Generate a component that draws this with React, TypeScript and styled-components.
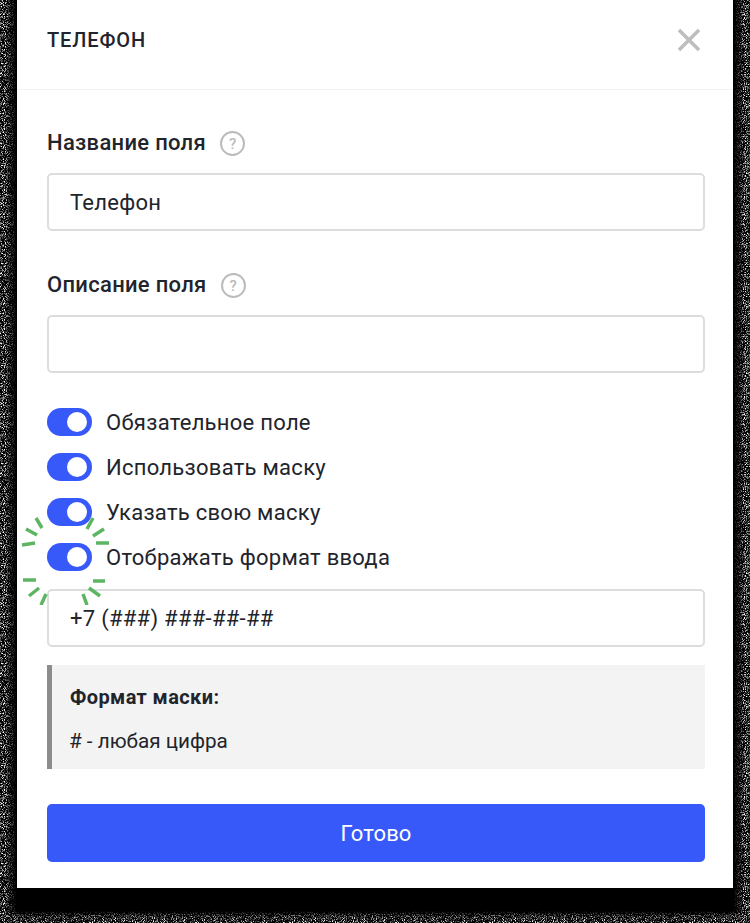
import React from "react"
import styled, { createGlobalStyle } from "styled-components"

const GlobalStyle = createGlobalStyle`
  html, body {
    margin: 0;
    padding: 0;
    background: #000000;
  }
  * {
    box-sizing: border-box;
  }
`;

const noise = encodeURIComponent(
  `<svg xmlns="http://www.w3.org/2000/svg" width="200" height="200"><filter id="n"><feTurbulence type="fractalNoise" baseFrequency="1.1" numOctaves="1" seed="4"/><feColorMatrix values="0 0 0 0 1 0 0 0 0 1 0 0 0 0 1 4 0 0 0 -1.9"/></filter><rect width="200" height="200" filter="url(#n)"/></svg>`
);

const toggles = ["Обязательное поле", "Использовать маску", "Указать свою маску", "Отображать формат ввода"];

const sparks = [
  [36, 518, 42, 528], [26, 529, 37, 535], [22, 545, 35, 543],
  [93, 518, 87, 529], [104, 529, 93, 536], [96, 543, 109, 543],
  [23, 580, 36, 580], [29, 596, 39, 588], [41, 605, 46, 594],
  [93, 581, 105, 581], [89, 588, 100, 596], [83, 594, 87, 605],
];

const App = () => {
  return (
    <>
      <GlobalStyle />
      <Page>
        <Card>
          <Header>
            <Title>ТЕЛЕФОН</Title>
            <CloseIcon viewBox="0 0 24 24">
              <path d="M2 2 L22 22 M22 2 L2 22" />
            </CloseIcon>
          </Header>
          <Body>
            <Field>
              <LabelRow>
                <Label>Название поля</Label>
                <Hint>?</Hint>
              </LabelRow>
              <Input defaultValue="Телефон" />
            </Field>
            <Field>
              <LabelRow>
                <Label>Описание поля</Label>
                <Hint>?</Hint>
              </LabelRow>
              <Input />
            </Field>
            <ToggleList>
              {toggles.map((t) => (
                <ToggleRow key={t}>
                  <Toggle />
                  <ToggleText>{t}</ToggleText>
                </ToggleRow>
              ))}
            </ToggleList>
            <Input defaultValue="+7 (###) ###-##-##" />
            <MaskNote>
              <MaskTitle>Формат маски:</MaskTitle>
              <MaskText># - любая цифра</MaskText>
            </MaskNote>
            <DoneButton>Готово</DoneButton>
          </Body>
          <Sparks viewBox="20 515 90 90">
            {sparks.map(([x1, y1, x2, y2]) => (
              <line key={`${x1}-${y1}`} x1={x1} y1={y1} x2={x2} y2={y2} />
            ))}
          </Sparks>
        </Card>
      </Page>
    </>
  )
}

const Page = styled.div`
  position: relative;
  width: 750px;
  height: 923px;
  overflow: hidden;
  background: #000000;
  padding: 0 17px;

  &::before {
    content: "";
    position: absolute;
    inset: 0;
    background-image: url("data:image/svg+xml,${noise}");
    mask-image: linear-gradient(to right, #000 5px, transparent 16px),
      linear-gradient(to left, #000 5px, transparent 16px),
      linear-gradient(to top, #000 4px, transparent 12px);
  }
`;

const Card = styled.div`
  position: relative;
  width: 716px;
  height: 888px;
  background: #FFFFFF;
`;

const Header = styled.div`
  height: 90px;
  padding: 0 32px 10px 30px;
  display: flex;
  align-items: center;
  justify-content: space-between;
  border-bottom: 1px solid #F3F3F3;
`;

const Title = styled.div`
  font-family: Roboto, sans-serif;
  font-size: 20px;
  font-weight: 500;
  letter-spacing: 0.9px;
  color: #22242C;
`;

const CloseIcon = styled.svg`
  width: 24px;
  height: 24px;
  fill: none;
  stroke: #BDBDBD;
  stroke-width: 3.5;
`;

const Body = styled.div`
  padding: 37px 28px 0 30px;
`;

const Field = styled.div`
  margin-bottom: 38px;

  &:nth-child(2) {
    margin-bottom: 37px;
  }
`;

const LabelRow = styled.div`
  display: flex;
  align-items: center;
  height: 30px;
  margin-bottom: 16px;
`;

const Label = styled.div`
  font-family: Roboto, sans-serif;
  font-size: 22px;
  font-weight: 500;
  letter-spacing: 0.3px;
  color: #22242C;
`;

const Hint = styled.span`
  width: 25px;
  height: 25px;
  margin: 3px 0 0 14px;
  border: 2px solid #BBBBBB;
  border-radius: 50%;
  display: flex;
  align-items: center;
  justify-content: center;
  font-family: Roboto, sans-serif;
  font-size: 15px;
  font-weight: 500;
  color: #BBBBBB;
`;

const Input = styled.input`
  display: block;
  width: 100%;
  height: 58px;
  padding: 0 21px;
  border: 2px solid #DDDDDD;
  border-radius: 5px;
  outline: none;
  background: #FFFFFF;
  font-family: Roboto, sans-serif;
  font-size: 22px;
  letter-spacing: 0.28px;
  color: #22242C;
`;

const ToggleList = styled.div`
  display: flex;
  flex-direction: column;
  gap: 21px;
  margin-bottom: 20px;
`;

const ToggleRow = styled.div`
  display: flex;
  align-items: center;
  height: 24px;
`;

const Toggle = styled.span`
  position: relative;
  width: 45px;
  height: 28px;
  border-radius: 14px;
  background: #3859F9;
  flex-shrink: 0;

  &::after {
    content: "";
    position: absolute;
    top: 4px;
    right: 5px;
    width: 20px;
    height: 20px;
    border-radius: 50%;
    background: #FFFFFF;
  }
`;

const ToggleText = styled.span`
  margin-left: 14px;
  font-family: Roboto, sans-serif;
  font-size: 22px;
  letter-spacing: 0.27px;
  color: #22242C;
`;

const MaskNote = styled.div`
  height: 104px;
  margin-top: 18px;
  padding: 20px 18px 0;
  background: #F3F3F3;
  border-left: 5px solid #8C8C8C;
`;

const MaskTitle = styled.div`
  font-family: Roboto, sans-serif;
  font-size: 20px;
  font-weight: 700;
  letter-spacing: 0.4px;
  color: #22242C;
`;

const MaskText = styled.div`
  margin: 20px 0 0 -1px;
  font-family: Roboto, sans-serif;
  font-size: 20.7px;
  color: #22242C;
`;

const DoneButton = styled.button`
  display: block;
  width: 100%;
  height: 58px;
  margin-top: 35px;
  border: none;
  border-radius: 5px;
  background: #3859F9;
  font-family: Roboto, sans-serif;
  font-size: 22px;
  letter-spacing: 0.1px;
  color: #FFFFFF;
`;

const Sparks = styled.svg`
  position: absolute;
  left: 3px;
  top: 515px;
  width: 90px;
  height: 90px;
  fill: none;
  stroke: #5DB562;
  stroke-width: 3.5;
  pointer-events: none;
`;

export default App;
